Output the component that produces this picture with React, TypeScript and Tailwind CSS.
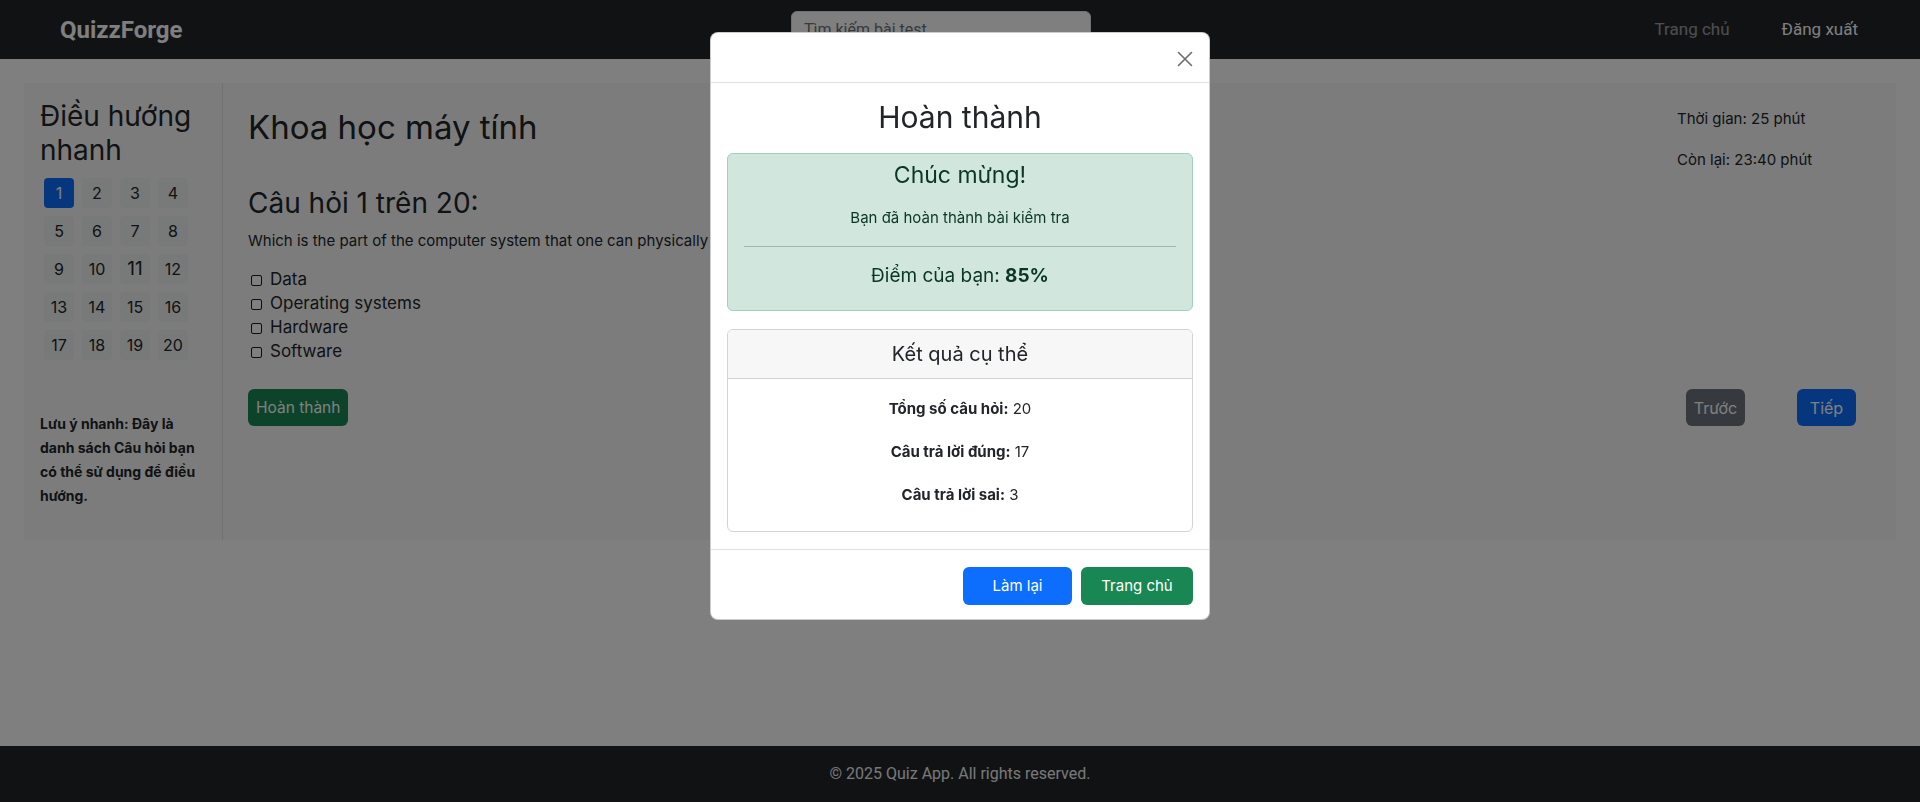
import React from "react";

const soCauHoi = Array.from({ length: 20 }, (_, i) => i + 1);
const dapAn = ["Data", "Operating systems", "Hardware", "Software"];

function Navbar() {
  return (
    <nav className="h-[59px] bg-[#212529] flex items-center pl-[60px] pr-[62px] font-['Roboto',sans-serif]">
      <div className="w-[122px] text-[24px] font-bold text-white whitespace-nowrap">
        QuizzForge
      </div>
      <div className="ml-[609px] w-[300px] h-[38px] bg-white rounded-[6px] border border-[#dee2e6] px-3 flex items-center text-[16px] text-[#6c757d]">
        Tìm kiếm bài test
      </div>
      <div className="ml-auto flex items-center gap-[52px] text-[17px]">
        <span className="text-white/55">Trang chủ</span>
        <span className="text-white">Đăng xuất</span>
      </div>
    </nav>
  );
}

function SidebarDieuHuong() {
  return (
    <aside className="w-[199px] shrink-0 border-r border-[#dee2e6] px-4 pt-[17px] pb-[32px]">
      <h3 className="text-[28px] leading-[33.6px] text-[#212529] mb-[11px]">
        Điều hướng nhanh
      </h3>
      <div className="ml-[4px] grid grid-cols-[repeat(4,30px)] gap-[8px]">
        {soCauHoi.map((so) => (
          <button
            key={so}
            className={
              so === 1
                ? "w-[30px] h-[30px] rounded-[4px] bg-[#0d6efd] text-white text-[16px] flex items-center justify-center"
                : so === 11
                  ? "w-[30px] h-[30px] rounded-[4px] bg-[#f1f2f3] text-[#212529] text-[19px] flex items-center justify-center"
                  : "w-[30px] h-[30px] rounded-[4px] bg-[#f1f2f3] text-[#212529] text-[16px] flex items-center justify-center"
            }
          >
            {so}
          </button>
        ))}
      </div>
      <p className="mt-[52px] text-[14px] font-bold leading-[24px] text-[#212529]">
        Lưu ý nhanh: Đây là danh sách Câu hỏi bạn có thể sử dụng để điều hướng.
      </p>
    </aside>
  );
}

function NoiDungCauHoi() {
  return (
    <section className="flex-1 pl-[25px] pt-[24px] text-[#212529]">
      <h2 className="text-[33px] leading-[40px]">Khoa học máy tính</h2>
      <h3 className="mt-[39px] text-[28px] leading-[34px]">
        Câu hỏi 1 trên 20:
      </h3>
      <p className="mt-[10px] text-[15px] leading-[22px] whitespace-nowrap">
        Which is the part of the computer system that one can physically touch?
      </p>
      <div className="mt-[16px]">
        {dapAn.map((item) => (
          <label key={item} className="flex items-center h-[24px] text-[17px]">
            <span className="ml-[3px] w-[11px] h-[11px] rounded-[2px] border-[1.5px] border-[#1a1a1a] bg-white" />
            <span className="ml-[8px]">{item}</span>
          </label>
        ))}
      </div>
      <button className="mt-[25px] h-[37px] px-[8px] rounded-[6px] bg-[#198754] text-white text-[15.5px]">
        Hoàn thành
      </button>
    </section>
  );
}

function CotThoiGian() {
  return (
    <div className="w-[219px] shrink-0 pt-[25px] text-[15px] leading-[22px] text-[#212529]">
      <p>Thời gian: 25 phút</p>
      <p className="mt-[19px]">Còn lại: 23:40 phút</p>
      <div className="mt-[218px] flex">
        <button className="ml-[9px] w-[59px] h-[37px] rounded-[6px] bg-[#6c757d] text-white text-[16px]">
          Trước
        </button>
        <button className="ml-[52px] w-[59px] h-[37px] rounded-[6px] bg-[#0d6efd] text-white text-[16px]">
          Tiếp
        </button>
      </div>
    </div>
  );
}

function ModalKetQua() {
  return (
    <div className="fixed inset-0 overflow-y-auto">
      <div className="w-[500px] mx-auto mt-[32px] bg-white rounded-[8px] border border-black/20 text-[#212529]">
        {/* header */}
        <div className="h-[50px] border-b border-[#dee2e6] flex items-center justify-end pr-[16px]">
          <svg width="16" height="16" viewBox="0 0 16 16" className="mt-[2px]">
            <path
              d="M1.5 1.5 L14.5 14.5 M14.5 1.5 L1.5 14.5"
              stroke="#6c6c6c"
              strokeWidth="1.6"
              strokeLinecap="round"
            />
          </svg>
        </div>

        {/* body */}
        <div className="px-[16px] pt-[16px] pb-[17px]">
          <h2 className="text-[30px] leading-[36px] text-center mb-[18px]">
            Hoàn thành
          </h2>

          <div className="border border-[#a3cfbb] bg-[#d1e7dd] text-[#0a3622] rounded-[6px] px-4 pt-[7px] pb-[23px] text-center">
            <h4 className="text-[23px] leading-[28px] mb-[17px]">Chúc mừng!</h4>
            <p className="text-[15px] leading-[23px]">
              Bạn đã hoàn thành bài kiểm tra
            </p>
            <hr className="mt-[17px] border-0 border-t border-[#a0bbae]" />
            <h5 className="mt-[17px] text-[19px] leading-[23px]">
              Điểm của bạn: <b>85%</b>
            </h5>
          </div>

          <div className="mt-[18px] border border-[#d3d3d3] rounded-[6px] overflow-hidden">
            <div className="h-[49px] bg-[#f7f7f7] border-b border-[#d3d3d3] flex items-center justify-center text-[20px]">
              Kết quả cụ thể
            </div>
            <div className="pt-[18px] pb-[25px] text-center text-[15px] leading-[23px]">
              <p>
                <b>Tổng số câu hỏi:</b> 20
              </p>
              <p className="mt-[20px]">
                <b>Câu trả lời đúng:</b> 17
              </p>
              <p className="mt-[20px]">
                <b>Câu trả lời sai:</b> 3
              </p>
            </div>
          </div>
        </div>

        {/* footer */}
        <div className="border-t border-[#dee2e6] px-[16px] pt-[17px] pb-[14px] flex justify-end gap-[9px]">
          <button className="w-[109px] h-[38px] rounded-[6px] bg-[#0d6efd] text-white text-[15px]">
            Làm lại
          </button>
          <button className="w-[112px] h-[38px] rounded-[6px] bg-[#198754] text-white text-[15px]">
            Trang chủ
          </button>
        </div>
      </div>
    </div>
  );
}

export default function App() {
  return (
    <div className="min-h-screen flex flex-col bg-white font-['Inter',sans-serif]">
      <Navbar />
      <main className="flex-1">
        <div className="mx-[24px] mt-[24px] bg-[#f8f9fa] flex">
          <SidebarDieuHuong />
          <NoiDungCauHoi />
          <CotThoiGian />
        </div>
      </main>
      <footer className="h-[56px] bg-[#212529] flex items-center justify-center text-[16px] text-[#f0f0f0] font-['Roboto',sans-serif]">
        © 2025 Quiz App. All rights reserved.
      </footer>

      {/* backdrop + modal */}
      <div className="fixed inset-0 bg-black/50" />
      <ModalKetQua />
    </div>
  );
}
